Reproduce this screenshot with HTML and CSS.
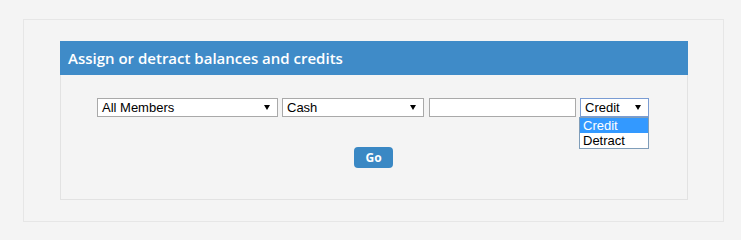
FILE: index.html
```html
<!DOCTYPE html>
<html>
<head>
<meta charset="utf-8">
<link rel="stylesheet" href="styles.css">
</head>
<body>
<div class="outer">
  <div class="panel">
    <div class="panel-head">Assign or detract balances and credits</div>
    <div class="panel-body">
      <div class="row">
        <div class="select w1"><span>All Members</span><svg class="arr" width="6" height="5" viewBox="0 0 6 5"><polygon points="0,0 6,0 3,5" fill="#000"/></svg></div>
        <div class="select w2"><span>Cash</span><svg class="arr" width="6" height="5" viewBox="0 0 6 5"><polygon points="0,0 6,0 3,5" fill="#000"/></svg></div>
        <input class="text" type="text">
        <div class="drop-wrap">
          <div class="select w4 focus"><span>Credit</span><svg class="arr" width="6" height="5" viewBox="0 0 6 5"><polygon points="0,0 6,0 3,5" fill="#000"/></svg></div>
          <ul class="menu">
            <li class="sel">Credit</li>
            <li>Detract</li>
          </ul>
        </div>
      </div>
      <div class="actions"><button class="go">Go</button></div>
    </div>
  </div>
</div>
</body>
</html>
```

FILE: styles.css
```css
html, body {
  margin: 0;
  padding: 0;
  background: #f4f4f4;
}
.outer {
  margin: 19px 17px 0 23px;
  border: 1px solid #e6e6e6;
  padding: 21px 35px 21px 36px;
  height: 159px;
}
.panel {
  border: 1px solid #e2e2e2;
  border-top: none;
  height: 158px;
}
.panel-head {
  background: #3f8bc8;
  color: #fff;
  height: 34px;
  line-height: 34px;
  padding-left: 8px;
  margin: 0 -1px;
  font-family: "Open Sans", sans-serif;
  font-size: 15px;
  font-weight: 600;
}
.panel-body {
  padding-top: 23px;
}
.row {
  display: flex;
  gap: 4px;
  padding-left: 36px;
  font-family: "Liberation Sans", Arial, sans-serif;
  font-size: 13px;
}
.select {
  box-sizing: border-box;
  height: 19px;
  border: 1px solid #a9a9a9;
  background: #fff;
  display: flex;
  align-items: center;
  justify-content: space-between;
  padding: 0 7px 0 4px;
  color: #000;
}
.select span { line-height: 17px; }
.w1 { width: 181px; }
.w2 { width: 142px; }
.w4 { width: 69px; }
.focus { border-color: #7a9cd3; }
.text {
  box-sizing: border-box;
  width: 147px;
  height: 19px;
  border: 1px solid #a9a9a9;
  margin: 0 0 0 1px;
  padding: 0;
  background: #fff;
}
.drop-wrap { position: relative; }
.menu {
  position: absolute;
  left: -1px;
  top: 19px;
  width: 70px;
  box-sizing: border-box;
  margin: 0;
  padding: 0;
  list-style: none;
  border: 1px solid #7f9db9;
  background: #fff;
}
.menu li {
  height: 15px;
  line-height: 15px;
  padding-left: 3px;
  font-size: 13px;
}
.menu li.sel {
  background: #3399ff;
  color: #fff;
}
.actions {
  display: flex;
  padding-top: 30px;
  padding-left: 293px;
}
.go {
  width: 39px;
  height: 21px;
  border: none;
  border-radius: 4px;
  background: #3a88c4;
  color: #fff;
  font-family: "Open Sans", sans-serif;
  font-weight: bold;
  font-size: 12px;
  padding: 0;
  line-height: 21px;
}
```
